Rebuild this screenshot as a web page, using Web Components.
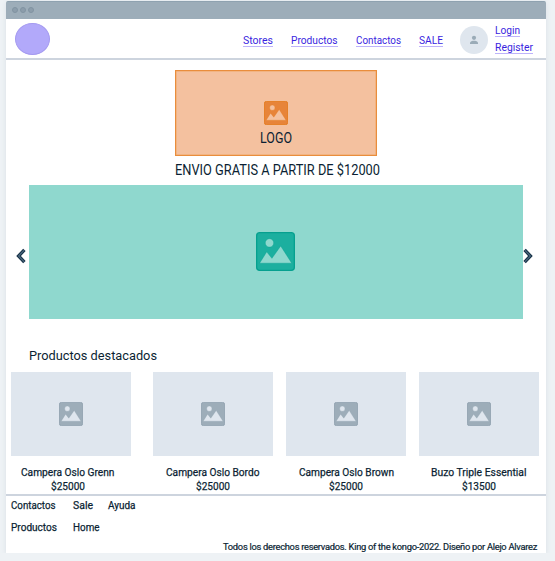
<!DOCTYPE html>
<html lang="es">
<head>
<meta charset="utf-8">
<title>King of the kongo</title>
<style>
html{margin:0;background:#eef2f5}
body{margin:0;padding:1px 0 0 6px;font-family:Roboto,"Liberation Sans",sans-serif;color:#0b1f33}
</style>
</head>
<body>
<shop-page></shop-page>
<script>
const define = (name, html, ready) => customElements.define(name, class extends HTMLElement {
  connectedCallback() {
    if (this.shadowRoot) return;
    const t = document.createElement('template');
    t.innerHTML = html;
    this.attachShadow({mode: 'open'}).append(t.content.cloneNode(true));
    if (ready) ready(this, this.shadowRoot);
  }
});

// One line of text, condensed or widened to the width given in `w`.
define('fit-text', `<style>
:host{display:block;width:max-content;white-space:nowrap;flex:none}
svg{display:block;overflow:visible}
text{fill:currentColor;stroke:currentColor;stroke-width:0}
:host([strong]) text{stroke-width:.25px}
</style><svg><text x="0" lengthAdjust="spacingAndGlyphs"></text></svg>`, (host, root) => {
  const w = +host.getAttribute('w'), size = +(host.getAttribute('size') || 11);
  const h = +(host.getAttribute('h') || 14);
  const svg = root.querySelector('svg'), text = root.querySelector('text');
  svg.setAttribute('width', w);
  svg.setAttribute('height', h);
  text.setAttribute('y', h - 3);
  text.setAttribute('textLength', w);
  text.setAttribute('font-size', size);
  text.textContent = host.getAttribute('text');
});

define('nav-link', `<style>
:host{display:block;flex:none;color:#3a1fe0}
a{display:block;height:13px;border-bottom:1px solid #bdb3fa;color:inherit;text-decoration:none}
</style><a></a>`, (host, root) => {
  root.querySelector('a').innerHTML =
    `<fit-text text="${host.getAttribute('text')}" w="${host.getAttribute('w')}" size="11.2"></fit-text>`;
});

define('picture-icon', `<style>
:host{display:block;width:24px;height:24px;color:#9dadb9;--edge:#8b9dab;--cut:#dfe6ee}
svg{display:block;width:100%;height:100%}
</style><svg viewBox="0 0 24 24"><rect x=".4" y=".4" width="23.2" height="23.2" rx="1.9" fill="currentColor" stroke="var(--edge)" stroke-width=".8"/>
<g fill="var(--cut)" stroke="var(--edge)" stroke-width=".25"><circle cx="8.3" cy="6.7" r="2.6"/><path d="M2.2 19.2 6.6 12.2 9.8 16.2 15.2 8.6 22 19.2Z"/></g></svg>`);

define('title-bar', `<style>
:host{display:flex;box-sizing:border-box;height:18px;padding-left:6px;gap:2px;align-items:center;background:#9dadb9;border-top:1px solid #8fa2b0;border-radius:2px 2px 0 0}
i{box-sizing:border-box;width:6px;height:6px;border-radius:50%;background:#8c9dab;border:1px solid #8194a2}
</style><i></i><i></i><i></i>`);

define('site-header', `<style>
:host{display:flex;box-sizing:border-box;height:41px;border-bottom:2px solid #cdd4de;padding-left:9px}
.logo{box-sizing:border-box;width:34.5px;height:32px;margin-top:4px;border-radius:50%;background:#b2a9fa;border:1px solid #a49af0}
nav{display:flex;margin:14px 0 0 193.5px;gap:18px}
.avatar{display:block;width:28px;height:28px;margin:7px 7px 0 17.5px}
.account{display:flex;flex-direction:column;align-items:flex-start;gap:3px;margin-top:4px}
</style><div class="logo"></div>
<nav><nav-link text="Stores" w="30"></nav-link><nav-link text="Productos" w="46.5"></nav-link><nav-link text="Contactos" w="45"></nav-link><nav-link text="SALE" w="24"></nav-link></nav>
<svg class="avatar" viewBox="0 0 28 28"><circle cx="14" cy="14" r="14" fill="#dfe6ee"/><g fill="#9aabb7"><circle cx="14" cy="11.8" r="2.1"/><path d="M10 18v-1c0-1.7 2.4-2.3 4-2.3s4 .6 4 2.3v1z"/></g></svg>
<div class="account"><nav-link text="Login" w="25"></nav-link><nav-link text="Register" w="38"></nav-link></div>`);

define('brand-box', `<style>
:host{display:flex;flex-direction:column;align-items:center;box-sizing:border-box;width:202px;height:86px;border:1px solid #e98d3c;background:#f4c19f;padding-top:30px;box-shadow:inset 0 0 0 .5px #efa766}
picture-icon{color:#e78439;--edge:#e27512;--cut:#f4c19f}
fit-text{margin:3px 1px 0 0}
</style><picture-icon></picture-icon><fit-text text="LOGO" w="32" size="14.2" h="18"></fit-text>`);

define('hero-carousel', `<style>
:host{display:flex;align-items:center;height:134px;padding-left:10px}
.arrow{display:block;width:10px;height:16px;margin-top:7px;flex:none}
.slide{display:flex;align-items:center;justify-content:center;width:493.5px;height:134px;background:#8fd8ce;margin:0 0 0 3px}
picture-icon{width:39px;height:39px;margin-bottom:1px;color:#1caf9f;--edge:#06a08f;--cut:#8fd8ce}
</style><svg class="arrow" viewBox="0 0 10 16"><path d="M8.4 1.9 2.6 8l5.8 6.1" fill="none" stroke="#183247" stroke-width="3.4"/><path d="M8.2 2.2 2.6 8l5.6 5.8" fill="none" stroke="#48667d" stroke-width="1.2"/></svg>
<div class="slide"><picture-icon></picture-icon></div>
<svg class="arrow" viewBox="0 0 10 16"><path d="M1.6 1.9 7.4 8l-5.8 6.1" fill="none" stroke="#183247" stroke-width="3.4"/><path d="M1.8 2.2 7.4 8l-5.6 5.8" fill="none" stroke="#48667d" stroke-width="1.2"/></svg>`);

define('product-card', `<style>
:host{display:flex;flex-direction:column;align-items:center;width:120px}
.photo{display:flex;align-items:center;justify-content:center;width:120px;height:84px;background:#dfe6ee;margin-bottom:9px}
.name,.price{margin-left:var(--shift,0)}
</style><div class="photo"><picture-icon></picture-icon></div><div class="name"></div><div class="price"></div>`, (host, root) => {
  root.querySelector('.name').innerHTML = `<fit-text strong text="${host.getAttribute('name')}" w="${host.getAttribute('w')}" size="11.4"></fit-text>`;
  root.querySelector('.price').innerHTML = `<fit-text strong text="${host.getAttribute('price')}" w="34" size="11.4"></fit-text>`;
});

define('site-footer', `<style>
:host{display:flex;flex-direction:column;box-sizing:border-box;height:59px;border-top:2px solid #cdd4de;padding:2px 9px 0 5px}
.links{display:grid;grid-template-columns:62px 35px auto;row-gap:8px}
.copy{align-self:flex-end;margin:7px 0 0;font-size:9.3px;line-height:12px;white-space:nowrap;-webkit-text-stroke:.2px}
</style><div class="links"><fit-text strong text="Contactos" w="44.5"></fit-text><fit-text strong text="Sale" w="20"></fit-text><fit-text strong text="Ayuda" w="27.5"></fit-text><fit-text strong text="Productos" w="46"></fit-text><fit-text strong text="Home" w="26.5"></fit-text></div>
<p class="copy">Todos los derechos reservados. King of the kongo-2022. Diseño por Alejo Alvarez</p>`, (host, root) => {
  // Track the line so that it is 314px long.
  const copy = root.querySelector('.copy');
  copy.style.letterSpacing = (314 - copy.getBoundingClientRect().width) / copy.textContent.length + 'px';
});

define('shop-page', `<style>
:host{display:flex;flex-direction:column;box-sizing:border-box;width:540px;height:552px;background:#fff;border-radius:2px 2px 0 0;box-shadow:0 1px 5px #d9e0e6}
brand-box{margin:10px 0 0 169px}
.promo{margin:5.5px 0 0 169px}
hero-carousel{margin-top:7px}
h2{margin:27px 0 9px 23px;height:17px;font-weight:400;font-size:14px}
.products{display:grid;grid-template-columns:142px 133px 133px 120px;height:122px;padding-left:5px}
</style><title-bar></title-bar><site-header></site-header>
<brand-box></brand-box>
<fit-text class="promo" text="ENVIO GRATIS A PARTIR DE $12000" w="205" size="14" h="17"></fit-text>
<hero-carousel></hero-carousel>
<h2><fit-text text="Productos destacados" w="128" size="13.6" h="17"></fit-text></h2>
<div class="products">
<product-card name="Campera Oslo Grenn" price="$25000" w="93.5" style="--shift:-7px"></product-card>
<product-card name="Campera Oslo Bordo" price="$25000" w="93.5" style="--shift:-1px"></product-card>
<product-card name="Campera Oslo Brown" price="$25000" w="95"></product-card>
<product-card name="Buzo Triple Essential" price="$13500" w="95.5"></product-card>
</div>
<site-footer></site-footer>`);
</script>
</body>
</html>
